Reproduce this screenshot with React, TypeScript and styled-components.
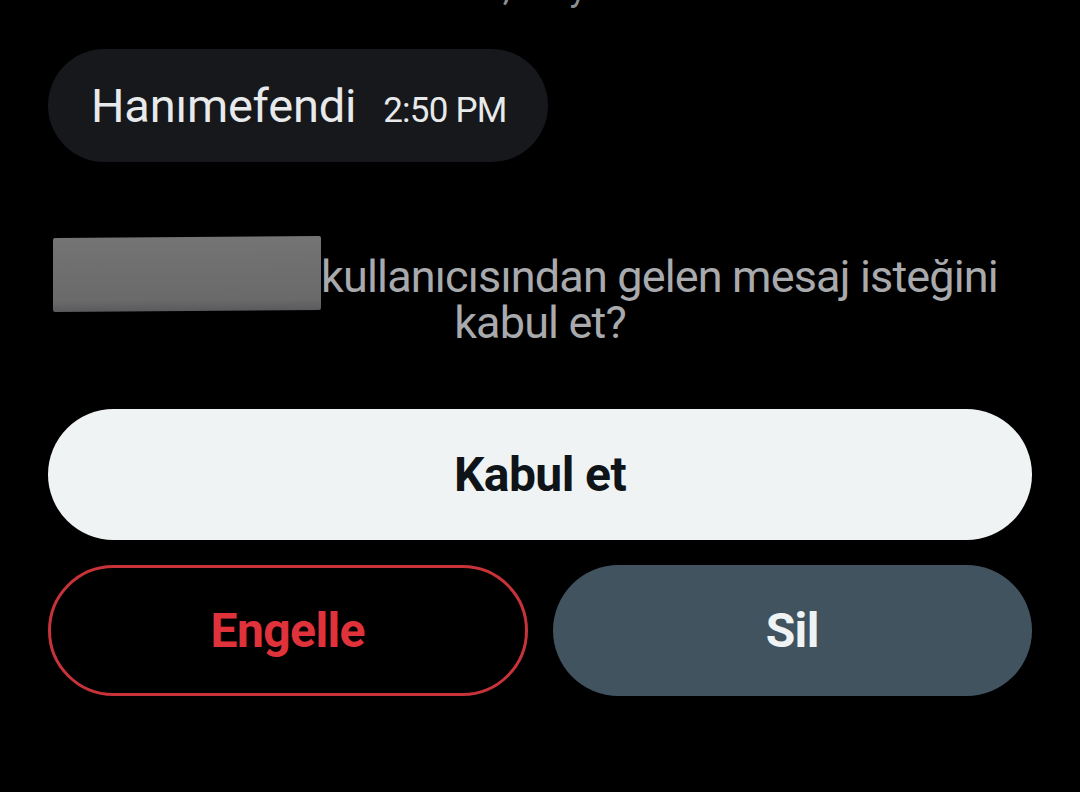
import styled, { createGlobalStyle } from "styled-components";

const GlobalStyle = createGlobalStyle`
  html, body {
    margin: 0;
    padding: 0;
    background: #000;
  }
  body {
    font-family: Roboto, "Noto Sans", "Liberation Sans", sans-serif;
  }
`;

const Screen = styled.div`
  width: 1080px;
  height: 792px;
  background: #000;
  overflow: hidden;
  display: flex;
  flex-direction: column;
  padding: 0 48px;
  box-sizing: border-box;
`;

// only the lower edge of the date shows at the top of the screen
const DateLabel = styled.div`
  text-align: center;
  color: #8b8f94;
  font-size: 36px;
  line-height: 40px;
  margin-top: -32px;
  height: 40px;
`;

const Bubble = styled.div`
  align-self: flex-start;
  display: flex;
  align-items: baseline;
  gap: 27px;
  margin-top: 41px;
  height: 113px;
  box-sizing: border-box;
  padding: 0 42px 0 43px;
  border-radius: 57px;
  background: #16181c;
  color: #e7e9ea;
  line-height: 113px;
`;

const BubbleText = styled.span`
  font-size: 47px;
  letter-spacing: -0.2px;
`;

const BubbleTime = styled.span`
  font-size: 35px;
  letter-spacing: -0.8px;
`;

const Notice = styled.div`
  margin-top: 75px;
  text-align: center;
  color: #a8aaad;
  font-size: 45px;
  line-height: 46px;
  letter-spacing: -0.85px;
`;

const Redacted = styled.span`
  display: inline-block;
  width: 268px;
  height: 74px;
  margin-left: -29px;
  margin-bottom: -11px;
  vertical-align: -8px;
  background: linear-gradient(180deg, #747474 0%, #6a6a6a 85%, #5a5a5e 100%);
  border-radius: 2px;
  transform: skewY(-0.4deg);
`;

const Actions = styled.div`
  margin-top: 63px;
  display: flex;
  flex-direction: column;
  gap: 25px;
`;

const Row = styled.div`
  display: grid;
  grid-template-columns: 1fr 1fr;
  gap: 25px;
`;

const Pill = styled.button<{ $variant: "light" | "danger" | "muted" }>`
  width: 100%;
  height: 131px;
  border-radius: 66px;
  box-sizing: border-box;
  font-family: inherit;
  font-size: 48px;
  font-weight: 700;
  letter-spacing: -0.6px;
  cursor: pointer;
  background: ${(p) =>
    p.$variant === "light" ? "#eff3f4" : p.$variant === "muted" ? "#425360" : "#000"};
  color: ${(p) =>
    p.$variant === "light" ? "#0f1419" : p.$variant === "muted" ? "#eff3f4" : "#e0323b"};
  border: ${(p) => (p.$variant === "danger" ? "3px solid #c8333a" : "none")};
`;

const App = () => {
  return (
    <>
      <GlobalStyle />
      <Screen>
        <DateLabel>Tue, May 13</DateLabel>
        <Bubble>
          <BubbleText>Hanımefendi</BubbleText>
          <BubbleTime>2:50 PM</BubbleTime>
        </Bubble>
        <Notice>
          <Redacted />
          kullanıcısından gelen mesaj isteğini
          <br />
          kabul et?
        </Notice>
        <Actions>
          <Pill $variant="light">Kabul et</Pill>
          <Row>
            <Pill $variant="danger">Engelle</Pill>
            <Pill $variant="muted">Sil</Pill>
          </Row>
        </Actions>
      </Screen>
    </>
  );
};

export default App;
